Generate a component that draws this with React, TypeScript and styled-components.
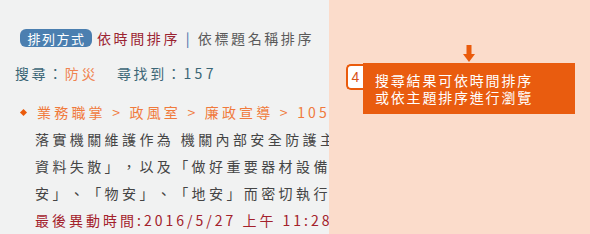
import React from 'react'
import styled, {createGlobalStyle} from 'styled-components'

const GlobalStyle = createGlobalStyle`
  html, body {
    margin: 0;
    padding: 0;
  }
  body {
    font-family: "Noto Sans CJK TC", "Noto Sans", sans-serif;
    text-spacing-trim: space-all;
    font-feature-settings: "palt" 0;
  }
`

const Page = styled.div`
  width: 590px;
  height: 234px;
  display: flex;
  overflow: hidden;
`

const ListPanel = styled.div`
  width: 329px;
  flex: none;
  background: #f1f2f2;
  overflow: hidden;
  padding: 28px 0 0 15px;
  box-sizing: border-box;
  font-size: 14px;
  letter-spacing: 2.6px;
  white-space: nowrap;
`

const SortRow = styled.div`
  display: flex;
  align-items: center;
  height: 20px;
  padding-left: 5px;
  color: #5a5a5a;
`

const SortBadge = styled.span`
  display: inline-flex;
  align-items: center;
  justify-content: center;
  height: 18px;
  width: 72px;
  border-radius: 6px;
  background: #4b7fb0;
  color: #fff;
  font-size: 13px;
  letter-spacing: 1.5px;
  margin-right: 5px;
  box-sizing: border-box;
  padding-left: 1px;
`

const Tone = styled.span<{$c: string}>`
  color: ${(p) => p.$c};
`

const QueryRow = styled.div`
  margin-top: 15px;
  height: 20px;
  line-height: 20px;
  color: #3b6676;
`

const Count = styled.span`
  letter-spacing: 3.4px;
`

const Gap = styled.span`
  display: inline-block;
  width: 19px;
`

const Results = styled.div`
  margin-top: 16px;
  line-height: 27px;
`

const Crumbs = styled.div`
  display: flex;
  align-items: center;
  color: #f07a3c;
  letter-spacing: 3.2px;
`

const Diamond = styled.span`
  width: 5px;
  height: 5px;
  background: #ea5b0c;
  transform: rotate(45deg);
  margin: 0 11px 0 6px;
  flex: none;
`

const Body = styled.div<{$c?: string; $ls?: number}>`
  padding-left: 20px;
  letter-spacing: ${(p) => p.$ls ?? 3.4}px;
  color: ${(p) => p.$c ?? '#454545'};
`

const HintPanel = styled.div`
  flex: 1;
  background: #fbdccb;
  padding: 45px 0 0 17px;
  box-sizing: border-box;
`

const Arrow = styled.svg`
  display: block;
  margin-left: 117px;
`

const Callout = styled.div`
  display: flex;
  align-items: flex-start;
`

const StepBadge = styled.div`
  width: 17px;
  height: 26px;
  margin-top: 1px;
  background: #fff;
  border: 2px solid #ea5b0c;
  border-right: none;
  border-radius: 5px 0 0 5px;
  box-sizing: border-box;
  display: flex;
  align-items: center;
  justify-content: center;
  color: #d9531a;
  font-family: "Liberation Sans", Arial, sans-serif;
  font-size: 14px;
`

const HintBox = styled.div`
  width: 212px;
  height: 51px;
  background: #e95c0f;
  color: #fff;
  box-sizing: border-box;
  padding: 0 0 0 12px;
  font-size: 14px;
  letter-spacing: 1.8px;
  line-height: 17px;
  display: flex;
  flex-direction: column;
  justify-content: center;
`

export default function App() {
  return (
    <Page>
      <GlobalStyle />
      <ListPanel>
        <SortRow>
          <SortBadge>排列方式</SortBadge>
          <Tone $c="#9b2331">依時間排序</Tone>
          <Tone $c="#2f6ea6">&nbsp;|&nbsp;</Tone>
          <span>依標題名稱排序</span>
        </SortRow>
        <QueryRow>
          搜尋：<Tone $c="#f08350">防災</Tone>
          <Gap />
          尋找到：<Count>157</Count>
        </QueryRow>
        <Results>
          <Crumbs>
            <Diamond />
            業務職掌 &gt; 政風室 &gt; 廉政宣導 &gt; 105年政風宣導
          </Crumbs>
          <Body>落實機關維護作為 機關內部安全防護主要為「</Body>
          <Body>資料失散」，以及「做好重要器材設備保</Body>
          <Body>安」、「物安」、「地安」而密切執行防</Body>
          <Body $c="#a3212b" $ls={3}>
            最後異動時間:2016/5/27 上午 11:28:09
          </Body>
        </Results>
      </ListPanel>
      <HintPanel>
        <Arrow width="12" height="18" viewBox="0 0 12 18">
          <rect x="3.5" y="0" width="5" height="10" fill="#ea5b0c" />
          <polygon points="0,9 12,9 6,17" fill="#ea5b0c" />
        </Arrow>
        <Callout>
          <StepBadge>4</StepBadge>
          <HintBox>
            <div>搜尋結果可依時間排序</div>
            <div>或依主題排序進行瀏覽</div>
          </HintBox>
        </Callout>
      </HintPanel>
    </Page>
  )
}
